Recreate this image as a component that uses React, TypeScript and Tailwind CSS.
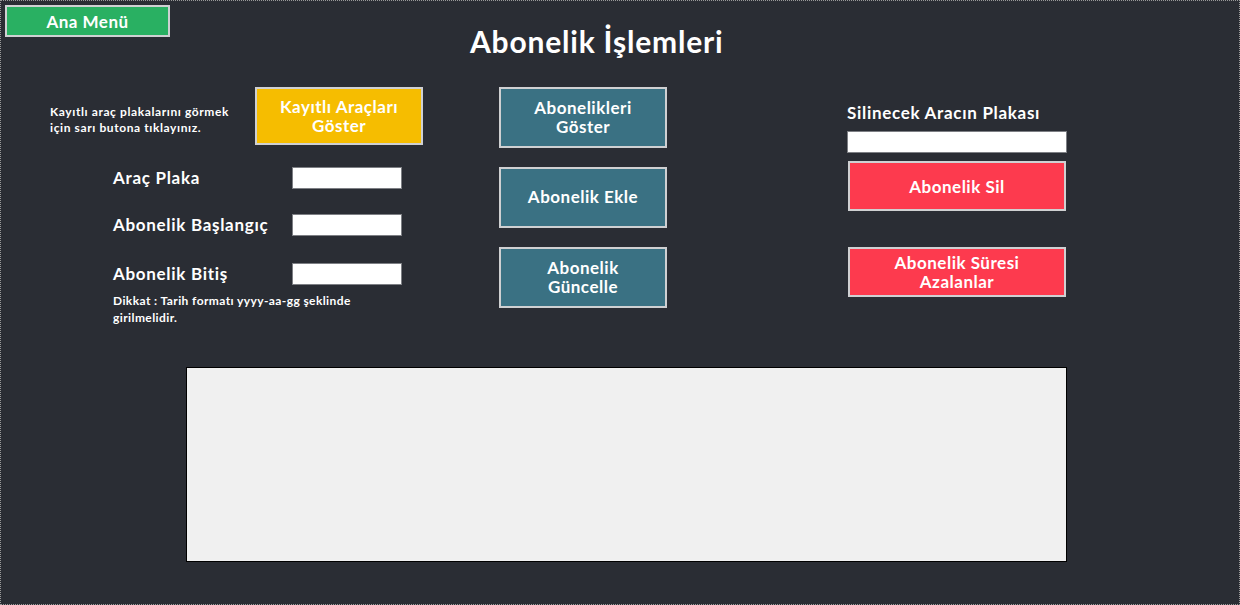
import React from "react";

const font = { fontFamily: "Lato, 'Noto Sans', sans-serif" };

function FormButton({ label, color, className }: { label: React.ReactNode; color: string; className: string }) {
  return (
    <button
      className={`border-2 border-[#cfd0d2] ${color} text-white font-bold leading-[19px] tracking-[0.5px] flex items-center justify-center text-center ${className}`}
    >
      {label}
    </button>
  );
}

function TextBox({ className }: { className: string }) {
  return <div className={`bg-white border border-[#7d7f84] h-[22px] ${className}`} />;
}

export default function App() {
  const fields = [
    { label: "Araç Plaka", mt: "mt-[22px]" },
    { label: "Abonelik Başlangıç", mt: "mt-[25px]" },
    { label: "Abonelik Bitiş", mt: "mt-[27px]" },
  ];

  return (
    <div
      className="w-[1240px] h-[605px] bg-[#2a2d34] border border-dotted border-[#9a9a9a] flex flex-col text-white overflow-hidden"
      style={font}
    >
      {/* Top: menu button + title */}
      <div className="flex items-start h-[86px]">
        <FormButton
          label="Ana Menü"
          color="bg-[#29b062]"
          className="ml-[4px] mt-[4px] w-[165px] h-[32px] text-[17px]"
        />
        <h1 className="ml-[300px] mt-[25px] text-[30px] font-bold leading-none tracking-[0.8px]">
          Abonelik İşlemleri
        </h1>
      </div>

      {/* Main controls */}
      <div className="flex items-start h-[280px]">
        {/* Left column */}
        <div className="ml-[49px] w-[373px] flex flex-col">
          <div className="flex items-start">
            <p className="w-[205px] mt-[17px] text-[12px] font-bold leading-[16px] tracking-[0.6px]">
              Kayıtlı araç plakalarını görmek
              <br />
              için sarı butona tıklayınız.
            </p>
            <FormButton
              label={
                <>
                  Kayıtlı Araçları
                  <br />
                  Göster
                </>
              }
              color="bg-[#f6bd00]"
              className="w-[168px] h-[58px] text-[17px]"
            />
          </div>
          {fields.map((f) => (
            <div key={f.label} className={`flex items-center ${f.mt}`}>
              <span className="ml-[63px] w-[179px] text-[17px] font-bold leading-[22px] tracking-[0.7px]">
                {f.label}
              </span>
              <TextBox className="w-[110px]" />
            </div>
          ))}
          <p className="ml-[63px] mt-[7px] w-[262px] text-[12px] font-bold leading-[17px] tracking-[0.4px]">
            Dikkat : Tarih formatı yyyy-aa-gg şeklinde girilmelidir.
          </p>
        </div>

        {/* Middle column */}
        <div className="ml-[76px] w-[168px] flex flex-col gap-[19px]">
          <FormButton
            label={
              <>
                Abonelikleri
                <br />
                Göster
              </>
            }
            color="bg-[#3a7183]"
            className="w-[168px] h-[61px] text-[17px] pb-[2px]"
          />
          <FormButton label="Abonelik Ekle" color="bg-[#3a7183]" className="w-[168px] h-[61px] text-[17px] pb-[2px]" />
          <FormButton
            label={
              <>
                Abonelik
                <br />
                Güncelle
              </>
            }
            color="bg-[#3a7183]"
            className="w-[168px] h-[61px] text-[17px] pb-[2px]"
          />
        </div>

        {/* Right column */}
        <div className="ml-[180px] w-[220px] flex flex-col">
          <span className="mt-[17px] text-[17px] font-bold leading-[18px] tracking-[0.7px]">
            Silinecek Aracın Plakası
          </span>
          <TextBox className="mt-[9px] w-[220px]" />
          <FormButton label="Abonelik Sil" color="bg-[#fd3a4e]" className="mt-[8px] ml-[1px] w-[218px] h-[50px] text-[17px]" />
          <FormButton
            label={
              <>
                Abonelik Süresi
                <br />
                Azalanlar
              </>
            }
            color="bg-[#fd3a4e]"
            className="mt-[36px] ml-[1px] w-[218px] h-[50px] text-[17px]"
          />
        </div>
      </div>

      {/* Data grid */}
      <div className="ml-[185px] w-[881px] h-[195px] bg-[#f0f0f0] border border-black" />
    </div>
  );
}
